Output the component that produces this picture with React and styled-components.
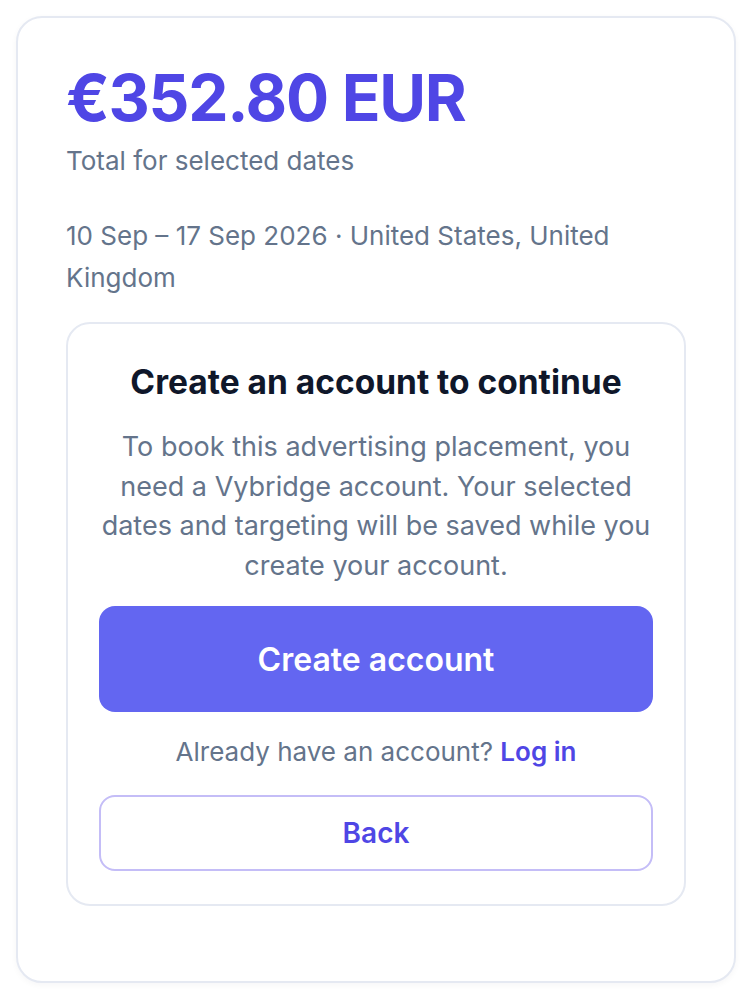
import styled, { createGlobalStyle } from "styled-components";

const GlobalStyle = createGlobalStyle`
    * { box-sizing: border-box; }
    body {
        margin: 0;
        background: #ffffff;
        font-family: Inter, "Noto Sans", sans-serif;
    }
`

export default function App(){

    return(
        <>
            <GlobalStyle/>
            <Page>
                <Card>
                    <Price>€352.80 EUR</Price>
                    <Subtitle>Total for selected dates</Subtitle>
                    <Details>10 Sep – 17 Sep 2026 · United States, United Kingdom</Details>
                    <Prompt>
                        <h2>Create an account to continue</h2>
                        <p>To book this advertising placement, you need a Vybridge account. Your selected dates and targeting will be saved while you create your account.</p>
                        <PrimaryButton>Create account</PrimaryButton>
                        <LoginLine>Already have an account? <a href="#">Log in</a></LoginLine>
                        <SecondaryButton>Back</SecondaryButton>
                    </Prompt>
                </Card>
            </Page>
        </>
    )
}

const Page = styled.div`
    padding: 16px;
`

const Card = styled.div`
    border: 2px solid #e5e9f2;
    border-radius: 26px;
    padding: 48px 48px 75px;
    background: #fff;
    box-shadow: 0 2px 6px rgba(15, 23, 42, 0.04);
`

const Price = styled.div`
    font-size: 64px;
    line-height: 1;
    font-weight: 700;
    letter-spacing: -0.02em;
    color: #4f46e5;
`

const Subtitle = styled.div`
    margin-top: 13px;
    font-size: 26px;
    line-height: 36px;
    color: #64748b;
`

const Details = styled.div`
    margin-top: 36px;
    font-size: 26px;
    line-height: 42px;
    color: #64748b;
`

const Prompt = styled.div`
    margin-top: 23px;
    border: 2px solid #e5e9f2;
    border-radius: 24px;
    padding: 38px 31px 33px;
    text-align: center;

    h2 {
        margin: 0;
        font-size: 33.5px;
        line-height: 40px;
        font-weight: 700;
        color: #0f172a;
    }

    p {
        margin: 25px 0 0;
        font-size: 27px;
        line-height: 39.5px;
        color: #64748b;
    }
`

const PrimaryButton = styled.button`
    display: block;
    width: 100%;
    height: 106px;
    margin-top: 21px;
    border: none;
    border-radius: 16px;
    background: #6366f1;
    color: #fff;
    font-family: inherit;
    font-size: 32px;
    font-weight: 600;
`

const LoginLine = styled.div`
    margin-top: 22px;
    font-size: 26px;
    line-height: 36px;
    color: #64748b;

    a {
        color: #4f46e5;
        font-weight: 600;
        text-decoration: none;
    }
`

const SecondaryButton = styled.button`
    display: block;
    width: 100%;
    height: 76px;
    margin-top: 25px;
    border: 2px solid #c4bdf7;
    border-radius: 16px;
    background: #fff;
    color: #4f46e5;
    font-family: inherit;
    font-size: 28px;
    font-weight: 600;
`
